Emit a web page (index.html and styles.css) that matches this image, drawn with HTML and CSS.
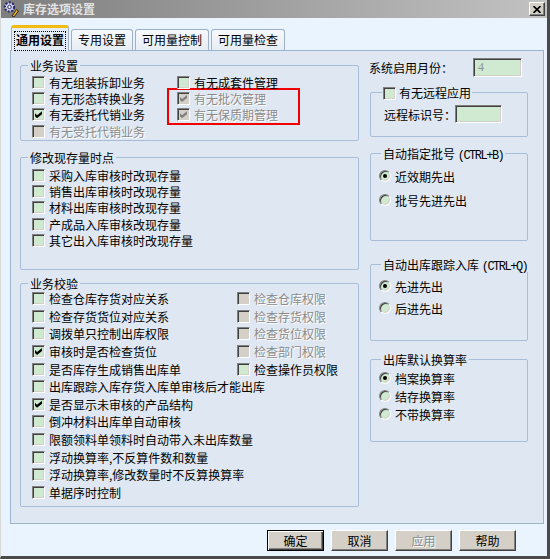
FILE: index.html
```html
<!DOCTYPE html>
<html lang="zh-CN">
<head>
  <meta charset="UTF-8">
  <title>库存选项设置</title>
  <link rel="stylesheet" href="styles.css">
</head>
<body>
  <div class="window">
    <div class="titlebar">
      <svg class="app-icon" width="16" height="16" viewBox="0 0 16 16">
        <circle cx="6.5" cy="6" r="4.6" fill="#cfd0f0" stroke="#2c2c66" stroke-width="2.2" stroke-dasharray="2 1.4"/>
        <circle cx="6.5" cy="6" r="1.7" fill="#fff" stroke="#2c2c66"/>
        <path d="M9 15 L13.5 8.5 L15.5 10 L11 16 Z" fill="#f2b01e" stroke="#111" stroke-width="0.8"/>
      </svg>
      <span class="title">库存选项设置</span>
      <button class="close">
        <svg width="8" height="7" viewBox="0 0 8 7"><path d="M0.5 0 L7.5 7 M7.5 0 L0.5 7" stroke="#000" stroke-width="1.7"/></svg>
      </button>
    </div>

    <div class="tabs">
      <div class="tab active"><span class="focus">通用设置</span></div>
      <div class="tab">专用设置</div>
      <div class="tab">可用量控制</div>
      <div class="tab">可用量检查</div>
    </div>

    <div class="panel">
      <div class="col col-left">
        <fieldset class="grp g1">
          <legend>业务设置</legend>
          <div class="g1-grid">
            <div class="stack">
              <label class="row"><span class="cb"></span>有无组装拆卸业务</label>
              <label class="row"><span class="cb"></span>有无形态转换业务</label>
              <label class="row"><span class="cb on"></span>有无委托代销业务</label>
              <label class="row off"><span class="cb"></span>有无受托代销业务</label>
            </div>
            <div class="stack">
              <label class="row"><span class="cb"></span>有无成套件管理</label>
              <div class="marked">
                <label class="row off"><span class="cb on"></span>有无批次管理</label>
                <label class="row off"><span class="cb on"></span>有无保质期管理</label>
              </div>
            </div>
          </div>
        </fieldset>

        <fieldset class="grp g2">
          <legend>修改现存量时点</legend>
          <label class="row"><span class="cb"></span>采购入库审核时改现存量</label>
          <label class="row"><span class="cb"></span>销售出库审核时改现存量</label>
          <label class="row"><span class="cb"></span>材料出库审核时改现存量</label>
          <label class="row"><span class="cb"></span>产成品入库审核改现存量</label>
          <label class="row"><span class="cb"></span>其它出入库审核时改现存量</label>
        </fieldset>

        <fieldset class="grp g3">
          <legend>业务校验</legend>
          <div class="g3-grid">
            <label class="row"><span class="cb"></span>检查仓库存货对应关系</label>
            <label class="row off"><span class="cb"></span>检查仓库权限</label>
            <label class="row"><span class="cb"></span>检查存货货位对应关系</label>
            <label class="row off"><span class="cb"></span>检查存货权限</label>
            <label class="row"><span class="cb"></span>调拨单只控制出库权限</label>
            <label class="row off"><span class="cb"></span>检查货位权限</label>
            <label class="row"><span class="cb on"></span>审核时是否检查货位</label>
            <label class="row off"><span class="cb"></span>检查部门权限</label>
            <label class="row"><span class="cb"></span>是否库存生成销售出库单</label>
            <label class="row"><span class="cb"></span>检查操作员权限</label>
            <label class="row wide"><span class="cb"></span>出库跟踪入库存货入库单审核后才能出库</label>
            <label class="row wide"><span class="cb on"></span>是否显示未审核的产品结构</label>
            <label class="row wide"><span class="cb"></span>倒冲材料出库单自动审核</label>
            <label class="row wide"><span class="cb"></span>限额领料单领料时自动带入未出库数量</label>
            <label class="row wide"><span class="cb"></span>浮动换算率,不反算件数和数量</label>
            <label class="row wide"><span class="cb"></span>浮动换算率,修改数量时不反算换算率</label>
            <label class="row wide"><span class="cb"></span>单据序时控制</label>
          </div>
        </fieldset>
      </div>

      <div class="col col-right">
        <div class="month">
          <span class="month-label">系统启用月份：</span>
          <span class="field month-field">4</span>
        </div>

        <fieldset class="grp remote">
          <legend><span class="cb"></span>有无远程应用</legend>
          <div class="remote-row">
            <span>远程标识号：</span>
            <span class="field remote-field"></span>
          </div>
        </fieldset>

        <fieldset class="grp r-batch">
          <legend>自动指定批号 <span class="key">(CTRL+B)</span></legend>
          <label class="opt"><span class="rd on"></span>近效期先出</label>
          <label class="opt"><span class="rd"></span>批号先进先出</label>
        </fieldset>

        <fieldset class="grp r-track">
          <legend>自动出库跟踪入库 <span class="key">(CTRL+Q)</span></legend>
          <label class="opt"><span class="rd on"></span>先进先出</label>
          <label class="opt"><span class="rd"></span>后进先出</label>
        </fieldset>

        <fieldset class="grp r-rate">
          <legend>出库默认换算率</legend>
          <label class="opt"><span class="rd on"></span>档案换算率</label>
          <label class="opt"><span class="rd"></span>结存换算率</label>
          <label class="opt"><span class="rd"></span>不带换算率</label>
        </fieldset>
      </div>
    </div>

    <div class="actions">
      <button class="btn default">确定</button>
      <button class="btn">取消</button>
      <button class="btn disabled">应用</button>
      <button class="btn">帮助</button>
    </div>
  </div>
</body>
</html>
```

FILE: styles.css
```css
* {
  box-sizing: border-box;
}
body {
  margin: 0;
  font-family: "Noto Sans CJK SC", "Liberation Sans", sans-serif;
  font-size: 12px;
  color: #000;
  background: #eaf4fe;
}
.window {
  width: 550px;
  height: 559px;
  background: #eaf4fe;
  border-left: 1px solid #d8d8d8;
  border-right: 3px solid #4a4a4a;
  border-bottom: 3px solid #4a4a4a;
}

/* title bar */
.titlebar {
  display: flex;
  align-items: center;
  height: 18px;
  padding-left: 2px;
  background: linear-gradient(to right, #7e7e7e, #c2c2c2);
}
.app-icon {
  flex: none;
}
.title {
  margin-left: 4px;
  font-weight: bold;
  color: #e4e4e4;
  line-height: 18px;
}
.close {
  display: flex;
  align-items: center;
  justify-content: center;
  width: 16px;
  height: 14px;
  margin-left: auto;
  margin-right: 2px;
  padding: 0;
  background: #d4d0c8;
  border: 1px solid;
  border-color: #fff #404040 #404040 #fff;
  box-shadow: inset -1px -1px #808080;
}

/* tabs */
.tabs {
  display: flex;
  align-items: flex-end;
  gap: 2px;
  height: 26px;
  margin-top: 6px;
  padding-left: 10px;
  position: relative;
  z-index: 1;
}
.tab {
  height: 21px;
  padding: 0 6px;
  line-height: 19px;
  border: 1px solid #9eb0c6;
  border-bottom: none;
  border-radius: 3px 3px 0 0;
  background: linear-gradient(#f6f9fc, #e6edf4);
  white-space: nowrap;
}
.tab.active {
  height: 26px;
  margin-bottom: -1px;
  padding: 3px 2px 0;
  font-weight: bold;
  border-top: 3px solid #f2bd12;
  background: #e4ecf5;
}
.focus {
  display: block;
  height: 20px;
  padding: 0 2px;
  line-height: 18px;
  outline: 1px dotted #000;
  outline-offset: -1px;
}

/* panel */
.panel {
  display: grid;
  grid-template-columns: 339px 158px;
  column-gap: 11px;
  height: 474px;
  margin: 0 3px 0 9px;
  padding: 7px 0 0 9px;
  background: #dfe8f2;
  border: 1px solid #9db4cd;
}
.col {
  display: flex;
  flex-direction: column;
}
.grp {
  margin: 0;
  padding: 0 0 0 11px;
  min-width: 0;
  border: 1px solid #a7bdd8;
  border-radius: 2px;
}
.grp legend {
  margin-left: -4px;
  padding: 0 2px;
  line-height: 15px;
  height: 15px;
  white-space: nowrap;
}
.col-right .grp {
  padding-left: 8px;
}
.col-right .grp legend {
  margin-left: 2px;
}
.key {
  font-family: "Liberation Mono", monospace;
  font-size: 12px;
  letter-spacing: -1.5px;
}

.g1 {
  height: 83px;
  padding-top: 1px;
}
.g2 {
  height: 120px;
  margin-top: 9px;
  padding-top: 2px;
}
.g3 {
  height: 231px;
  margin-top: 6px;
}
.g1-grid {
  display: grid;
  grid-template-columns: 145px auto;
}
.g3-grid {
  display: grid;
  grid-template-columns: 205px auto;
  grid-auto-rows: 17.6px;
  margin-top: -1px;
}
.g3-grid .row {
  height: 17.6px;
}
.wide {
  grid-column: 1 / -1;
}

.row {
  display: flex;
  align-items: center;
  height: 16.3px;
  white-space: nowrap;
}
.g2 .row {
  height: 16.4px;
}
.row.off {
  color: #8a8a8a;
  text-shadow: 1px 1px 0 #fff;
}
.marked {
  width: 133px;
  margin: -2px 0 0 -10px;
  padding-left: 8px;
  border: 2px solid #f00000;
}

/* checkbox */
.cb {
  position: relative;
  flex: none;
  display: inline-block;
  width: 13px;
  height: 13px;
  margin-right: 4px;
  background: #d0ead2;
  border: 1px solid;
  border-color: #808080 #fff #fff #808080;
  box-shadow: inset 1px 1px #404040, inset -1px -1px #d4d0c8;
}
.off .cb {
  background: #d4d0c8;
}
.cb.on::after {
  content: "";
  position: absolute;
  left: 2px;
  top: 2px;
  width: 7px;
  height: 7px;
  background: #000;
  clip-path: polygon(0 28%, 29% 57%, 100% 0, 100% 43%, 29% 100%, 0 71%);
}
.off .cb.on::after {
  background: #808080;
}
legend .cb {
  vertical-align: -2px;
  margin-right: 3px;
}

/* radio */
.opt {
  display: flex;
  align-items: center;
  white-space: nowrap;
}
.rd {
  position: relative;
  flex: none;
  width: 12px;
  height: 12px;
  margin-right: 4px;
  border-radius: 50%;
  background: #d0ead2;
  border: 1px solid;
  border-color: #808080 #fff #fff #808080;
  box-shadow: inset 1px 1px #404040, inset -1px -1px #d4d0c8;
}
.rd.on::after {
  content: "";
  position: absolute;
  left: 3px;
  top: 3px;
  width: 4px;
  height: 4px;
  border-radius: 50%;
  background: #000;
}

/* right column */
.month {
  display: flex;
  align-items: center;
  height: 19px;
}
.month-label {
  width: 104px;
  margin-left: -1px;
}
.field {
  display: block;
  background: #d0ead2;
  border: 1px solid;
  border-color: #808080 #fff #fff #808080;
  box-shadow: inset 1px 1px #404040, inset -1px -1px #d4d0c8;
}
.month-field {
  width: 49px;
  height: 19px;
  padding-left: 4px;
  font-family: "Liberation Serif", serif;
  color: #909090;
  line-height: 17px;
}
.remote {
  height: 52px;
  margin-top: 8px;
}
.col-right .remote {
  padding-left: 13px;
}
.col-right .remote legend {
  margin-left: -2px;
  padding: 0 1px;
}
.remote-row {
  display: flex;
  align-items: center;
  height: 18px;
  margin-top: 5px;
}
.remote-field {
  width: 47px;
  height: 18px;
  margin-left: -1px;
}
.r-batch {
  height: 95px;
  margin-top: 9px;
  padding-top: 3px;
}
.r-batch .opt {
  height: 24px;
}
.r-track {
  height: 84px;
  margin-top: 16px;
  padding-top: 3px;
}
.r-track .opt {
  height: 22px;
}
.r-rate {
  height: 90px;
  margin-top: 11px;
  padding-top: 2px;
}
.r-rate .opt {
  height: 18px;
}

/* buttons */
.actions {
  display: flex;
  justify-content: flex-end;
  gap: 7px;
  margin-top: 6px;
  padding-right: 31px;
}
.btn {
  width: 57px;
  height: 21px;
  padding: 0;
  font-family: inherit;
  font-size: 12px;
  color: #000;
  background: #d4d0c8;
  border: 1px solid;
  border-color: #fff #404040 #404040 #fff;
  box-shadow: inset -1px -1px #808080;
}
.btn.default {
  border: 1px solid #000;
  box-shadow: inset 1px 1px #fff, inset -1px -1px #404040, inset -2px -2px #808080;
}
.btn.disabled {
  color: #8a8a8a;
  text-shadow: 1px 1px 0 #fff;
}
```
